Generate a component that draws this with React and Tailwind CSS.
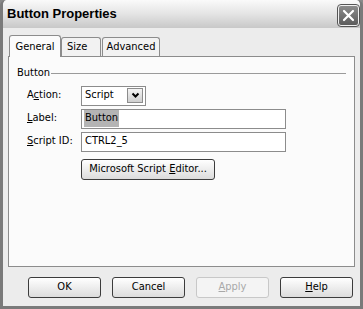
import React from "react";

const font = { fontFamily: '"DejaVu Sans Condensed", "Liberation Sans", Arial, sans-serif' };

function Btn({ children, disabled, className = "" }) {
  return (
    <div
      className={
        "flex h-[21px] items-center justify-center rounded-[3px] border text-[11px] " +
        (disabled
          ? "border-[#c8c8c8] bg-[#f4f4f4] text-[#a8a8a8] "
          : "border-[#3c3c3c] bg-gradient-to-b from-white to-[#dcdcdc] text-black ") +
        className
      }
    >
      {children}
    </div>
  );
}

function Field({ label, children }) {
  return (
    <div className="flex h-[20px] items-center">
      <div className="w-[54px] text-[11px]">{label}</div>
      {children}
    </div>
  );
}

export default function App() {
  return (
    <div style={font} className="w-[363px] h-[309px] bg-[#8a8a8a] text-black">
      <div className="flex h-full flex-col rounded-t-[6px] border-[3px] border-t-0 border-[#7a7a7a] bg-[#ececec]">
        <div className="flex h-[28px] items-center justify-between rounded-t-[5px] bg-gradient-to-b from-[#fafafa] via-[#e4e4e4] to-[#c8c8c8] pl-[4px] pr-[1px]">
          <span style={{ fontFamily: '"Liberation Sans", Arial, sans-serif' }} className="text-[13px] font-bold">
            Button Properties
          </span>
          <div className="mt-[2px] flex h-[21px] w-[21px] items-center justify-center rounded-[3px] border border-[#f0f0f0] bg-gradient-to-b from-[#8c8c8c] to-[#5c5c5c] outline outline-1 outline-[#555]">
            <svg width="13" height="13" viewBox="0 0 13 13">
              <path d="M2 2 L11 11 M11 2 L2 11" stroke="white" strokeWidth="2.2" strokeLinecap="round" />
            </svg>
          </div>
        </div>

        <div className="flex flex-1 flex-col px-[5px] pt-[8px]">
          <div className="flex items-end h-[20px] pl-[1px]">
            <div className="relative z-10 -mb-px flex h-[22px] w-[52px] items-start justify-center rounded-t-[3px] border border-b-0 border-[#8c8c8c] bg-[#fbfbfb] pt-[3px] text-[11px]">
              General
            </div>
            <div className="flex h-[19px] w-[40px] items-center rounded-t-[3px] border border-b-0 border-[#8c8c8c] bg-[#f2f2f2] pl-[5px] text-[11px]">
              Size
            </div>
            <div className="ml-[1px] flex h-[19px] w-[58px] items-center justify-center rounded-t-[3px] border border-b-0 border-[#8c8c8c] bg-[#f2f2f2] text-[11px]">
              Advanced
            </div>
          </div>

          <div className="h-[211px] border border-[#8c8c8c] bg-[#fbfbfb] px-[8px] pt-[8px]">
            <div className="flex items-center text-[11px]">
              <span>Button</span>
              <div className="ml-[1px] h-px flex-1 bg-[#9a9a9a]" />
            </div>

            <div className="mt-[4px] flex flex-col gap-[3px] pl-[10px]">
              <Field label={<span>A<u>c</u>tion:</span>}>
                <div className="flex h-[20px] w-[65px] items-center justify-between border border-[#8c8c8c] bg-white pl-[3px] pr-[2px] text-[11px]">
                  <span>Script</span>
                  <div className="flex h-[15px] w-[16px] items-center justify-center border border-[#8c8c8c] bg-gradient-to-b from-[#f4f4f4] to-[#cfcfcf]">
                    <svg width="9" height="7" viewBox="0 0 9 7">
                      <path d="M1.5 1.5 L4.5 4.5 L7.5 1.5" stroke="black" strokeWidth="2" fill="none" />
                    </svg>
                  </div>
                </div>
              </Field>
              <Field label={<span><u>L</u>abel:</span>}>
                <div className="flex h-[20px] w-[205px] items-center border border-[#8c8c8c] bg-white pl-[2px] text-[11px]">
                  <span className="bg-[#b4b4b4] px-[1px]">Button</span>
                </div>
              </Field>
              <Field label={<span><u>S</u>cript ID:</span>}>
                <div className="flex h-[20px] w-[205px] items-center border border-[#8c8c8c] bg-white pl-[3px] text-[11px]">
                  CTRL2_5
                </div>
              </Field>
              <div className="pl-[54px] pt-[4px]">
                <Btn className="w-[134px]">
                  <span>Microsoft Script <u>E</u>ditor...</span>
                </Btn>
              </div>
            </div>
          </div>

          <div className="mt-[10px] flex gap-[11px] pl-[20px]">
            <Btn className="w-[73px]">OK</Btn>
            <Btn className="w-[73px]">Cancel</Btn>
            <Btn disabled className="w-[73px]"><span><u>A</u>pply</span></Btn>
            <Btn className="w-[73px]"><span><u>H</u>elp</span></Btn>
          </div>
        </div>
      </div>
    </div>
  );
}
